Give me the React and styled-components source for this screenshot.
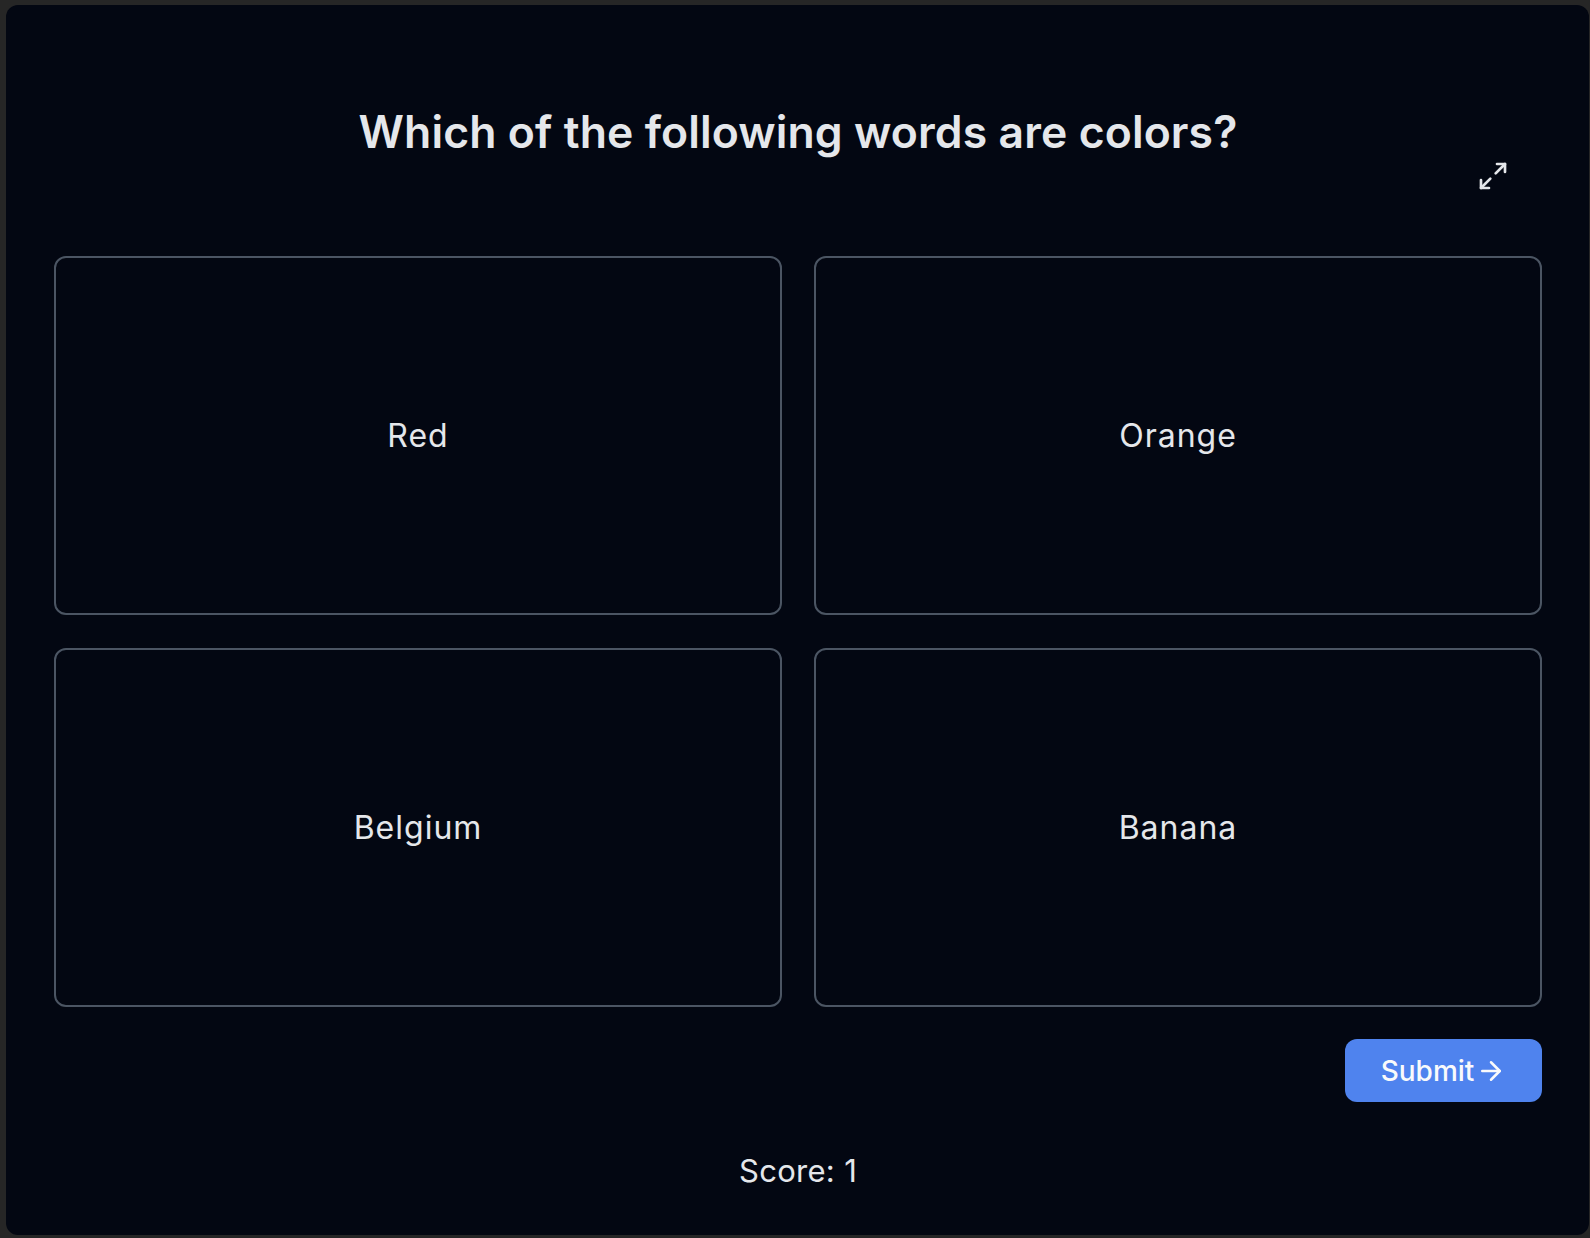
import React, { useState } from 'react'
import styled, { createGlobalStyle } from 'styled-components'
import { Maximize2, ArrowRight } from 'lucide-react'

const GlobalStyle = createGlobalStyle`
  html, body {
    margin: 0;
    padding: 0;
    background: #262626;
  }
  body {
    font-family: Inter, "Noto Sans", sans-serif;
  }
`

const options = ['Red', 'Orange', 'Belgium', 'Banana']

function App() {
  const [selected, setSelected] = useState([])
  const [score] = useState(1)

  const toggle = word =>
    setSelected(s => (s.includes(word) ? s.filter(w => w !== word) : [...s, word]))

  return (
    <>
      <GlobalStyle />
      <Frame>
        <Panel>
          <Header>
            <Title>Which of the following words are colors?</Title>
            <ExpandButton aria-label="Fullscreen">
              <Maximize2 size={32} strokeWidth={2} />
            </ExpandButton>
          </Header>
          <Grid>
            {options.map(word => (
              <Option key={word} active={selected.includes(word)} onClick={() => toggle(word)}>
                {word}
              </Option>
            ))}
          </Grid>
          <Actions>
            <SubmitButton>
              Submit
              <ArrowRight size={30} strokeWidth={2} />
            </SubmitButton>
          </Actions>
          <Score>Score: {score}</Score>
        </Panel>
      </Frame>
    </>
  )
}

export default App

const Frame = styled.div`
  padding: 5px 1px 3px 6px;
  min-height: 1238px;
  box-sizing: border-box;
`

const Panel = styled.div`
  background: #030712;
  border-radius: 12px;
  height: 1230px;
  box-sizing: border-box;
  padding: 0 47px 0 48px;
  display: flex;
  flex-direction: column;
  color: #e5e7eb;
`

const Header = styled.div`
  position: relative;
  height: 251px;
  display: flex;
  justify-content: center;
`

const Title = styled.h1`
  margin: 100px 0 0;
  font-size: 44.5px;
  line-height: 54px;
  font-weight: 600;
  letter-spacing: 0.1px;
  color: #e5e7eb;
`

const ExpandButton = styled.button`
  position: absolute;
  top: 155px;
  right: 33px;
  background: none;
  border: none;
  padding: 0;
  color: #e5e7eb;
  cursor: pointer;
  display: flex;
`

const Grid = styled.div`
  display: grid;
  grid-template-columns: 1fr 1fr;
  grid-auto-rows: 359px;
  column-gap: 32px;
  row-gap: 33px;
`

const Option = styled.button`
  background: ${p => (p.active ? '#111827' : '#030712')};
  border: 2px solid ${p => (p.active ? '#4f83ee' : '#4b5563')};
  border-radius: 12px;
  color: #e5e7eb;
  font-family: Inter, "Noto Sans", sans-serif;
  font-size: 32px;
  letter-spacing: 1px;
  cursor: pointer;
  display: flex;
  align-items: center;
  justify-content: center;
`

const Actions = styled.div`
  display: flex;
  justify-content: flex-end;
  margin-top: 32px;
`

const SubmitButton = styled.button`
  width: 197px;
  height: 63px;
  background: #4f83ee;
  border: none;
  border-radius: 12px;
  color: #f9fafb;
  font-family: Inter, "Noto Sans", sans-serif;
  font-size: 28px;
  font-weight: 500;
  display: flex;
  align-items: center;
  justify-content: center;
  gap: 2px;
  cursor: pointer;
`

const Score = styled.div`
  margin-top: 50px;
  text-align: center;
  font-size: 31px;
  letter-spacing: 0.3px;
  line-height: 38px;
`
